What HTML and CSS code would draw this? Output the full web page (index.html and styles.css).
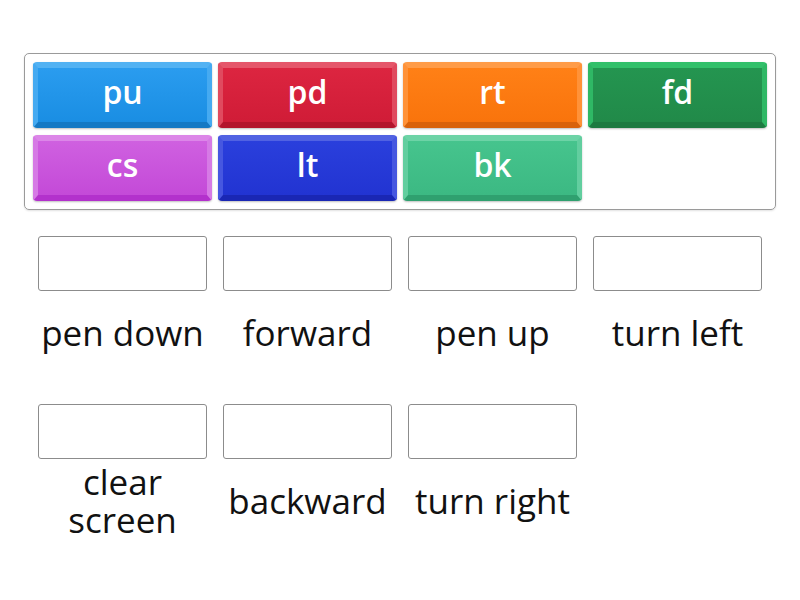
FILE: index.html
```html
<!DOCTYPE html>
<html>
<head>
<meta charset="utf-8">
<link rel="stylesheet" href="styles.css">
</head>
<body>
<div class="page">
  <div class="bank">
    <div class="tile t-blue">pu</div>
    <div class="tile t-red">pd</div>
    <div class="tile t-orange">rt</div>
    <div class="tile t-dgreen">fd</div>
    <div class="tile t-purple">cs</div>
    <div class="tile t-navy">lt</div>
    <div class="tile t-green">bk</div>
  </div>
  <div class="targets">
    <div class="slot"><div class="box"></div><div class="label">pen down</div></div>
    <div class="slot"><div class="box"></div><div class="label">forward</div></div>
    <div class="slot"><div class="box"></div><div class="label">pen up</div></div>
    <div class="slot"><div class="box"></div><div class="label">turn left</div></div>
    <div class="slot"><div class="box"></div><div class="label">clear<br>screen</div></div>
    <div class="slot"><div class="box"></div><div class="label">backward</div></div>
    <div class="slot"><div class="box"></div><div class="label">turn right</div></div>
  </div>
</div>
</body>
</html>
```

FILE: styles.css
```css
html, body {
  margin: 0;
  padding: 0;
  background: #fff;
  font-family: "Open Sans", "Liberation Sans", sans-serif;
}
.page {
  width: 800px;
  height: 600px;
  padding-top: 53px;
  box-sizing: border-box;
}
.bank {
  margin-left: 24px;
  width: 752px;
  box-sizing: border-box;
  border: 1px solid #9a9a9a;
  border-radius: 5px;
  padding: 8px;
  display: grid;
  grid-template-columns: repeat(4, 179px);
  grid-auto-rows: 66px;
  column-gap: 6px;
  row-gap: 7px;
  box-shadow: 0 1px 2px rgba(0,0,0,0.12);
}
.tile {
  box-sizing: border-box;
  border-radius: 4px;
  border-style: solid;
  border-width: 6px 5px 6px 5px;
  color: #fff;
  font-weight: 600;
  font-size: 32px;
  display: flex;
  align-items: center;
  justify-content: center;
  line-height: 1;
  padding-bottom: 6px;
  box-shadow: 0 1px 2px rgba(0,0,0,0.25);
}
.t-blue {
  background: linear-gradient(#2a9cef, #1a8ee3);
  border-color: #52b2f3 #45aaf1 #1479c4 #45aaf1;
}
.t-red {
  background: linear-gradient(#dc2540, #d01c37);
  border-color: #e5566a #e04a5f #b3142c #e04a5f;
}
.t-orange {
  background: linear-gradient(#ff8016, #f9740c);
  border-color: #ff9c48 #ff9238 #d9620a #ff9238;
}
.t-dgreen {
  background: linear-gradient(#249550, #218a49);
  border-color: #32c06a #2fb865 #1d7a41 #2fb865;
}
.t-purple {
  background: linear-gradient(#cf60e0, #c44ad8);
  border-color: #dc86e8 #d67ae5 #b331cc #d67ae5;
}
.t-navy {
  background: linear-gradient(#2a3fdc, #2234d2);
  border-color: #5162e2 #4657e0 #1a27b4 #4657e0;
}
.t-green {
  background: linear-gradient(#46c48d, #3cb983);
  border-color: #6dd3a6 #62ce9f #2fa06f #62ce9f;
}
.targets {
  margin-top: 26px;
  margin-left: 30px;
  display: grid;
  grid-template-columns: repeat(4, 185px);
  row-gap: 29px;
}
.slot {
  display: flex;
  flex-direction: column;
  align-items: center;
}
.box {
  width: 169px;
  height: 55px;
  box-sizing: border-box;
  border: 1px solid #8c8c8c;
  border-radius: 3px;
  background: #fff;
}
.label {
  height: 84px;
  width: 185px;
  display: flex;
  align-items: center;
  justify-content: center;
  text-align: center;
  font-size: 35px;
  line-height: 38px;
  color: #111;
}
```
